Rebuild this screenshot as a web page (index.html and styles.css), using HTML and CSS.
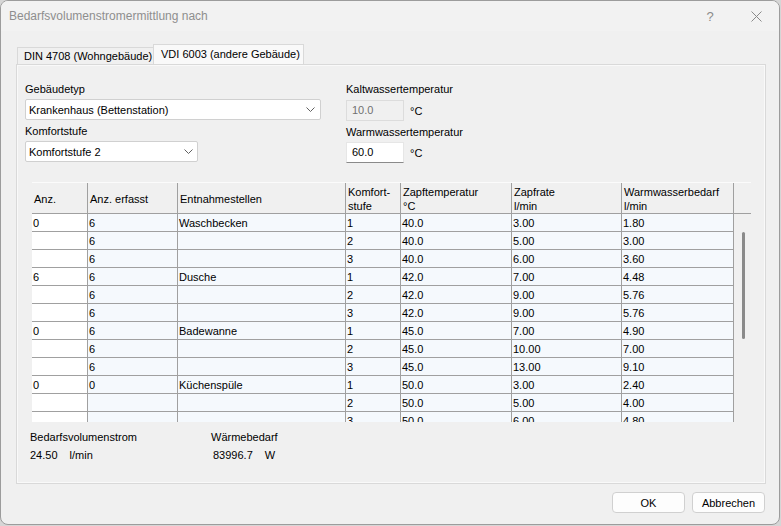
FILE: index.html
```html
<!DOCTYPE html>
<html lang="de">
<head>
    <meta charset="UTF-8">
    <title>Bedarfsvolumenstromermittlung nach</title>
    <link rel="stylesheet" href="styles.css">
</head>
<body>
    <div class="dialog">
        <div class="titlebar">
            <span class="title">Bedarfsvolumenstromermittlung nach</span>
            <span class="caption-btn help">?</span>
            <span class="caption-btn close">
                <svg width="11" height="11" viewBox="0 0 11 11"><path d="M0.5 0.5L10.5 10.5M10.5 0.5L0.5 10.5" stroke="#8a8a8a" stroke-width="1" fill="none"/></svg>
            </span>
        </div>

        <div class="main">
            <div class="tabs">
                <div class="tab">DIN 4708 (Wohngebäude)</div>
                <div class="tab active">VDI 6003 (andere Gebäude)</div>
            </div>

            <div class="panel">
                <div class="form">
                    <div class="col">
                        <div class="label">Gebäudetyp</div>
                        <div class="combo wide">
                            <span>Krankenhaus (Bettenstation)</span>
                            <svg width="9" height="5" viewBox="0 0 9 5"><path d="M0.5 0.5L4.5 4.5L8.5 0.5" stroke="#606060" fill="none"/></svg>
                        </div>
                        <div class="label gap">Komfortstufe</div>
                        <div class="combo narrow">
                            <span>Komfortstufe 2</span>
                            <svg width="9" height="5" viewBox="0 0 9 5"><path d="M0.5 0.5L4.5 4.5L8.5 0.5" stroke="#606060" fill="none"/></svg>
                        </div>
                    </div>
                    <div class="col">
                        <div class="label">Kaltwassertemperatur</div>
                        <div class="field-row first">
                            <div class="input disabled">10.0</div>
                            <span class="unit">°C</span>
                        </div>
                        <div class="label gap">Warmwassertemperatur</div>
                        <div class="field-row">
                            <div class="input">60.0</div>
                            <span class="unit">°C</span>
                        </div>
                    </div>
                </div>

                <div class="grid">
                    <div class="grid-head">
                        <div class="hc c1">Anz.</div>
                        <div class="hc c2">Anz. erfasst</div>
                        <div class="hc c3">Entnahmestellen</div>
                        <div class="hc c4">Komfort-<br>stufe</div>
                        <div class="hc c5">Zapftemperatur<br>°C</div>
                        <div class="hc c6">Zapfrate<br>l/min</div>
                        <div class="hc c7">Warmwasserbedarf<br>l/min</div>
                        <div class="hc filler"></div>
                    </div>
                    <div class="grid-body">
                        <table class="rows">
                            <colgroup>
                                <col class="c1"><col class="c2"><col class="c3"><col class="c4"><col class="c5"><col class="c6"><col class="c7">
                            </colgroup>
                            <tr><td>0</td><td>6</td><td>Waschbecken</td><td>1</td><td>40.0</td><td>3.00</td><td>1.80</td></tr>
                            <tr><td></td><td>6</td><td></td><td>2</td><td>40.0</td><td>5.00</td><td>3.00</td></tr>
                            <tr><td></td><td>6</td><td></td><td>3</td><td>40.0</td><td>6.00</td><td>3.60</td></tr>
                            <tr><td>6</td><td>6</td><td>Dusche</td><td>1</td><td>42.0</td><td>7.00</td><td>4.48</td></tr>
                            <tr><td></td><td>6</td><td></td><td>2</td><td>42.0</td><td>9.00</td><td>5.76</td></tr>
                            <tr><td></td><td>6</td><td></td><td>3</td><td>42.0</td><td>9.00</td><td>5.76</td></tr>
                            <tr><td>0</td><td>6</td><td>Badewanne</td><td>1</td><td>45.0</td><td>7.00</td><td>4.90</td></tr>
                            <tr><td></td><td>6</td><td></td><td>2</td><td>45.0</td><td>10.00</td><td>7.00</td></tr>
                            <tr><td></td><td>6</td><td></td><td>3</td><td>45.0</td><td>13.00</td><td>9.10</td></tr>
                            <tr><td>0</td><td>0</td><td>Küchenspüle</td><td>1</td><td>50.0</td><td>3.00</td><td>2.40</td></tr>
                            <tr><td></td><td></td><td></td><td>2</td><td>50.0</td><td>5.00</td><td>4.00</td></tr>
                            <tr><td></td><td></td><td></td><td>3</td><td>50.0</td><td>6.00</td><td>4.80</td></tr>
                        </table>
                        <div class="scroll">
                            <div class="thumb"></div>
                        </div>
                    </div>
                </div>

                <div class="summary">
                    <div class="sum-col first">
                        <div class="label">Bedarfsvolumenstrom</div>
                        <div class="value"><span>24.50</span><span class="sum-unit">l/min</span></div>
                    </div>
                    <div class="sum-col">
                        <div class="label">Wärmebedarf</div>
                        <div class="value shift"><span>83996.7</span><span class="sum-unit">W</span></div>
                    </div>
                </div>
            </div>

            <div class="buttons">
                <div class="button">OK</div>
                <div class="button">Abbrechen</div>
            </div>
        </div>
    </div>
</body>
</html>
```

FILE: styles.css
```css
body {
    margin: 0;
    background-color: #d6d6d6;
    font-family: "Liberation Sans", Arial, sans-serif;
    font-size: 11px;
    color: #000;
}

.dialog {
    width: 780px;
    height: 525px;
    box-sizing: border-box;
    border: 1px solid #9c9c9c;
    border-radius: 8px;
    background-color: #f0f0f0;
    overflow: hidden;
}

.titlebar {
    height: 30px;
    display: flex;
    align-items: center;
    background-color: #f2f2f2;
}

.title {
    flex: 1;
    padding-left: 8px;
    font-size: 12px;
    color: #8e8e8e;
}

.caption-btn {
    width: 46px;
    height: 30px;
    display: flex;
    justify-content: center;
    align-items: center;
    color: #8a8a8a;
}

.help {
    font-size: 13px;
}

.main {
    padding: 13px 0 0 15px;
}

.tabs {
    display: flex;
    align-items: flex-end;
    height: 20px;
    margin-left: 1px;
}

.tab {
    box-sizing: border-box;
    height: 17px;
    width: 136px;
    padding-left: 6px;
    line-height: 17px;
    border: 1px solid #d9d9d9;
    border-bottom: none;
    border-right: none;
}

.tab.active {
    height: 20px;
    width: 151px;
    padding-left: 7px;
    line-height: 19px;
    border-right: 1px solid #d9d9d9;
    background-color: #f9f9f9;
}

.panel {
    box-sizing: border-box;
    width: 750px;
    height: 420px;
    padding: 16px 8px 0 8px;
    border: 1px solid #d9d9d9;
    box-shadow: inset 0 0 0 1px #f9f9f9;
}

.form {
    display: flex;
    gap: 26px;
}

.col {
    display: flex;
    flex-direction: column;
}

.col:first-child {
    width: 295px;
}

.label {
    height: 16px;
    line-height: 16px;
}

.label.gap {
    margin-top: 3px;
}

.combo {
    box-sizing: border-box;
    height: 21px;
    margin-top: 2px;
    padding: 0 5px 0 3px;
    display: flex;
    justify-content: space-between;
    align-items: center;
    background-color: #fff;
    border: 1px solid #d0d0d0;
    border-radius: 2px;
}

.combo.wide {
    width: 296px;
}

.combo.narrow {
    width: 173px;
    padding-right: 4px;
}

.field-row {
    display: flex;
    align-items: center;
    margin-top: 2px;
}

.field-row.first {
    margin-top: 3px;
}

.input {
    box-sizing: border-box;
    width: 58px;
    height: 21px;
    padding-left: 5px;
    line-height: 19px;
    background-color: #fff;
    border: 1px solid #e6e6e6;
    border-bottom-color: #8a8a8a;
}

.input.disabled {
    background-color: #f0f0f0;
    border-color: #dcdcdc;
    color: #707070;
}

.unit {
    margin-left: 6px;
    margin-top: 1px;
}

.grid {
    width: 719px;
    height: 240px;
    margin: 19px 0 0 7px;
    overflow: hidden;
}

.grid-head {
    display: flex;
    height: 32px;
    box-sizing: border-box;
    border-top: 1px solid #fbfbfb;
    border-bottom: 1px solid #a0a0a0;
}

.hc {
    box-sizing: border-box;
    display: flex;
    align-items: center;
    padding: 2px 2px 0 2px;
    line-height: 14px;
    border-right: 1px solid #a0a0a0;
}

.hc.filler {
    width: 17px;
    border-right: none;
}

.c1 { width: 56px; }
.c2 { width: 90px; }
.c3 { width: 168px; }
.c4 { width: 55px; }
.c5 { width: 111px; }
.c6 { width: 110px; }
.c7 { width: 112px; }

.grid-body {
    display: flex;
}

.rows {
    width: 702px;
    table-layout: fixed;
    border-collapse: separate;
    border-spacing: 0;
}

.rows td {
    height: 18px;
    padding: 2px 0 0 1px;
    box-sizing: border-box;
    line-height: 15px;
    vertical-align: top;
    background-color: #f5f9fd;
    border-right: 1px solid #a0a0a0;
    border-bottom: 1px solid #a0a0a0;
    white-space: nowrap;
    overflow: hidden;
}

.rows td:first-child {
    background-color: #fff;
}

.scroll {
    width: 17px;
    padding: 18px 0 0 8px;
    box-sizing: border-box;
}

.thumb {
    width: 3px;
    height: 107px;
    border-radius: 2px;
    background-color: #8a8a8a;
}

.summary {
    display: flex;
    margin: 7px 0 0 5px;
}

.sum-col.first {
    width: 181px;
}

.value {
    margin-top: 2px;
    height: 16px;
    line-height: 16px;
}

.value.shift {
    padding-left: 2px;
}

.sum-unit {
    margin-left: 12px;
}

.buttons {
    display: flex;
    justify-content: flex-end;
    gap: 7px;
    width: 749px;
    margin-top: 8px;
}

.button {
    box-sizing: border-box;
    width: 73px;
    height: 21px;
    line-height: 20px;
    text-align: center;
    background-color: #fdfdfd;
    border: 1px solid #d0d0d0;
    border-radius: 4px;
}
```
